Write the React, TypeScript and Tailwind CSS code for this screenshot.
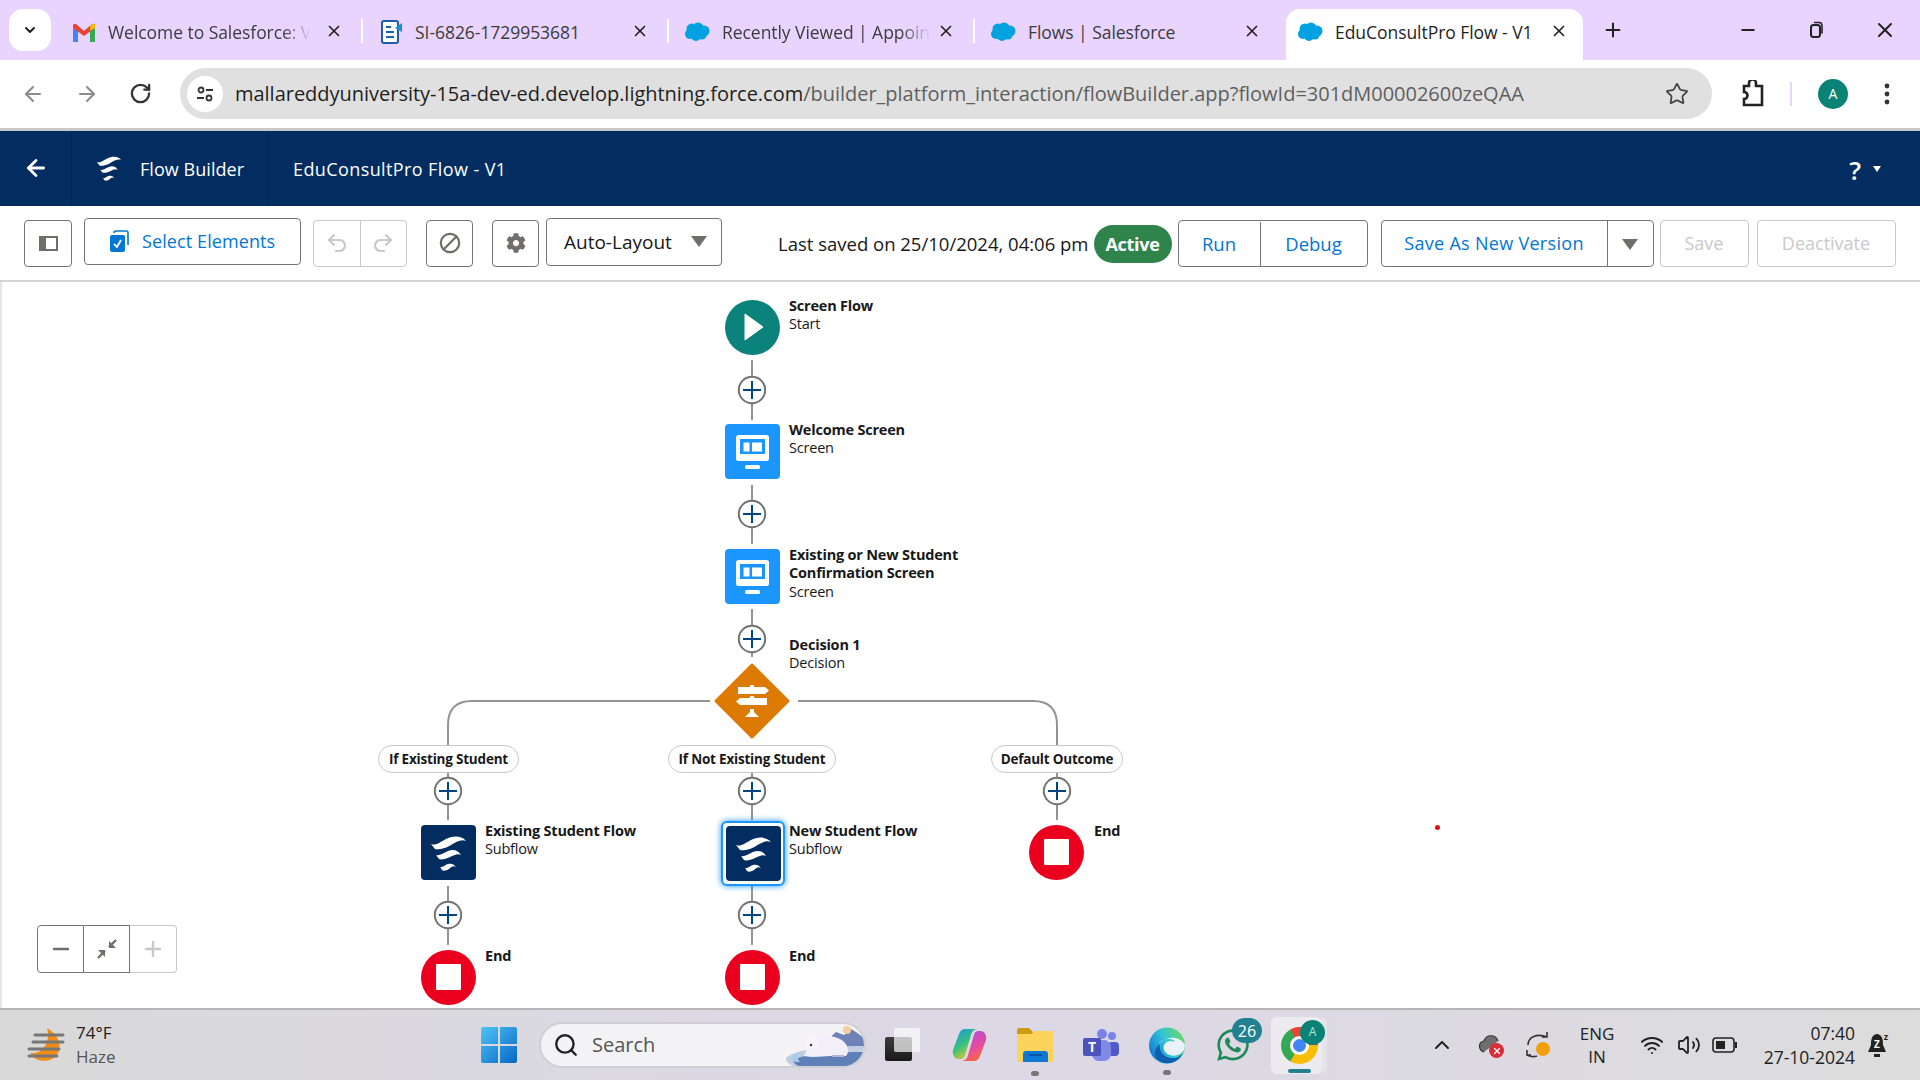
import React from "react";
import { ArrowLeft, ArrowRight, RotateCw, Star, Plus, Minus, X, Search, Ban, Undo2, Redo2, ChevronDown, ChevronUp, Wifi, Volume2 } from "lucide-react";
import { FaCog, FaWhatsapp } from "react-icons/fa";

const font = "font-['Open_Sans','Noto_Sans',sans-serif]";

const CloudIcon = () => (
	<svg width="26" height="20" viewBox="0 0 26 20" className="shrink-0">
		<g fill="#00A1E0">
			<circle cx="8" cy="7" r="5.5" />
			<circle cx="14" cy="6" r="5.5" />
			<circle cx="20" cy="9" r="5.5" />
			<circle cx="6" cy="12" r="5" />
			<circle cx="12" cy="14" r="5" />
			<circle cx="18" cy="13" r="4.5" />
		</g>
	</svg>
);

const GmailIcon = () => (
	<svg width="24" height="19" viewBox="0 0 24 19" className="shrink-0">
		<path d="M1 5 L1 19 L6 19 L6 8z" fill="#4285F4" />
		<path d="M18 8 L18 19 L23 19 L23 5z" fill="#34A853" />
		<path d="M1 5 L1 2 Q2 0 4 1 L12 8 L20 1 Q22 0 23 2 L23 5 L12 13z" fill="#EA4335" />
		<path d="M18 8 L23 5 L23 2 Q22 0 20 1 L18 3z" fill="#FBBC04" />
	</svg>
);

const DocIcon = () => (
	<svg width="22" height="24" viewBox="0 0 22 24" className="ml-[3px] shrink-0">
		<rect x="1" y="1" width="16" height="22" rx="2" fill="#fff" stroke="#1a5fa8" strokeWidth="2" />
		<path d="M5 7h5M5 12h8M5 17h8" stroke="#1a5fa8" strokeWidth="2" />
		<path d="M21 3 L14 8 L21 12z" fill="#1a8fd0" />
	</svg>
);

const Tab = ({ icon, title, active, noSep, fade }: { icon: React.ReactNode; title: string; active?: boolean; noSep?: boolean; fade?: boolean }) => (
	<div className={`relative flex h-[51px] shrink-0 items-center pb-[4px] ${active ? "ml-[5px] w-[297px] rounded-t-[14px] bg-white pl-[11px]" : "w-[306px] pl-[15px]"}`}>
		{icon}
		<span className={`ml-[12px] whitespace-nowrap text-[17.5px] tracking-[-0.05px] ${fade ? "text-[#3c3c3c] [mask-image:linear-gradient(to_right,black_86%,transparent)]" : active ? "text-[#1f1f1f]" : "text-[#3c3c3c]"}`}>
			{title}
		</span>
		<X size={18} strokeWidth={2.2} className={`absolute top-[13px] text-[#222] ${active ? "left-[264px]" : "left-[268px]"}`} />
		{!noSep && !active && <span className="absolute right-0 top-[10px] h-[24px] w-[2px] bg-white" />}
	</div>
);

const TopBars = () => (
	<>
		<div className="flex h-[60px] items-end bg-[#e8d4fe]">
			<div className="mb-[9px] ml-[9px] flex h-[42px] w-[42px] items-center justify-center rounded-[14px] bg-white">
				<ChevronDown size={16} strokeWidth={3} className="text-[#222]" />
			</div>
			<div className="ml-[6px] flex">
				<Tab icon={<GmailIcon />} title="Welcome to Salesforce: V" fade />
				<Tab icon={<DocIcon />} title="SI-6826-1729953681" />
				<Tab icon={<CloudIcon />} title="Recently Viewed | Appoin" fade />
				<Tab icon={<CloudIcon />} title="Flows | Salesforce" noSep />
				<Tab icon={<CloudIcon />} title="EduConsultPro Flow - V1" active />
			</div>
			<Plus size={22} strokeWidth={2.2} className="mb-[19px] ml-[19px] text-[#222]" />
			<Minus size={20} strokeWidth={2.2} className="mb-[20px] ml-[114px] text-[#222]" />
			<svg width="16" height="18" viewBox="0 0 16 18" className="mb-[21px] ml-[51px]">
				<rect x="2" y="4" width="9" height="12" rx="2.5" fill="none" stroke="#222" strokeWidth="2" />
				<path d="M5 1.5h5a3 3 0 0 1 3 3v8" fill="none" stroke="#222" strokeWidth="1.6" />
			</svg>
			<X size={24} strokeWidth={2} className="mb-[18px] ml-[48px] text-[#222]" />
		</div>
		<div className="flex h-[68px] items-center rounded-t-[10px] bg-white">
			<ArrowLeft size={24} strokeWidth={2} className="ml-[21px] text-[#8a8a8a]" />
			<ArrowRight size={24} strokeWidth={2} className="ml-[30px] text-[#8a8a8a]" />
			<RotateCw size={23} strokeWidth={2.4} className="ml-[30px] text-[#333]" />
			<div className="ml-[28px] flex h-[51px] w-[1532px] items-center rounded-full bg-[#e0e0e0] pl-[7px]">
				<div className="flex h-[36px] w-[36px] items-center justify-center rounded-full bg-white">
					<svg width="18" height="18" viewBox="0 0 18 18" fill="none" stroke="#333" strokeWidth="1.8">
						<circle cx="5" cy="5" r="2.5" />
						<path d="M10 5h7M1 13h7" />
						<circle cx="13" cy="13" r="2.5" />
					</svg>
				</div>
				<span className="ml-[12px] whitespace-nowrap text-[20px] tracking-[-0.02px] text-[#1f1f1f]">
					mallareddyuniversity-15a-dev-ed.develop.lightning.force.com
					<span className="text-[#5f5f5f]">/builder_platform_interaction/flowBuilder.app?flowId=301dM00002600zeQAA</span>
				</span>
				<Star size={24} strokeWidth={1.8} className="ml-auto mr-[23px] text-[#444]" />
			</div>
			<svg width="26" height="28" viewBox="0 0 26 28" className="ml-[28px]" fill="none" stroke="#222" strokeWidth="2.6">
				<path d="M4 6h5V3a3 3 0 0 1 7 0v3h6v19H4v-6a3 3 0 0 0 0-7z" />
			</svg>
			<span className="ml-[24px] h-[24px] w-[2px] bg-[#e8d4fe]" />
			<div className="ml-[26px] flex h-[30px] w-[30px] items-center justify-center rounded-full bg-[#0b8276] text-[14px] text-white">A</div>
			<svg width="6" height="24" viewBox="0 0 6 24" className="ml-[36px]" fill="#333">
				<circle cx="3" cy="4" r="2.4" />
				<circle cx="3" cy="12" r="2.4" />
				<circle cx="3" cy="20" r="2.4" />
			</svg>
		</div>
		<div className="h-[3px] bg-[#c9c9c9]" />
	</>
);

// the three waves of the Flow logo, viewBox fits the mark inside a 56px node
const FlowMark = ({ size, className }: { size: number; className?: string }) => (
	<svg width={size} height={size} viewBox="10 9 37 37" className={className} fill="#fff">
		<path d="M11 19 C16 21 20 17 26 14 C32 11 41 10 46 16 C41 14 36 17 31 20 C25 24 17 25 15 24 Z" />
		<path d="M16 30 C20 31 23 28 28 26 C33 24 38 25 41 30 C38 28 34 30 30 32 C26 34 21 35 19 34 Z" />
		<path d="M20 42 C22 43 25 40 28 39 C31 38 34 39 36 42 C33 40 31 42 29 44 C26 46 23 46 22 45 Z" />
	</svg>
);

const AppHeader = () => (
	<div className="flex h-[75px] items-stretch bg-[#032d60] text-white">
		<div className="flex w-[72px] items-center justify-center border-r border-[#04244d]">
			<ArrowLeft size={26} strokeWidth={2.6} />
		</div>
		<div className="flex w-[196px] items-center border-r border-[#04244d] pl-[24px]">
			<FlowMark size={26} />
			<span className="ml-[18px] pt-[2px] text-[18px] tracking-[0.05px]">Flow Builder</span>
		</div>
		<div className="ml-[25px] flex items-center pt-[2px] text-[18px] tracking-[0.4px]">EduConsultPro Flow - V1</div>
		<div className="ml-auto mr-[39px] flex items-center">
			<span className="pt-[4px] text-[26px] font-semibold">?</span>
			<span className="ml-[12px] mt-[2px] h-0 w-0 border-x-[4px] border-t-[6px] border-x-transparent border-t-white" />
		</div>
	</div>
);

const Caret = ({ className }: { className: string }) => (
	<span className={`h-0 w-0 border-x-[8px] border-t-[11px] border-x-transparent border-t-[#706e6b] ${className}`} />
);

const Toolbar = () => (
	<div className="flex h-[76px] items-start border-b-2 border-[#d4d4d4] bg-white pl-[24px] pt-[12px] text-[18px]">
		<button className="mt-[2px] flex h-[47px] w-[48px] items-center justify-center rounded-[4px] border border-[#747474]">
			<svg width="19" height="15" viewBox="0 0 19 15">
				<rect x="1" y="1" width="17" height="13" fill="none" stroke="#706e6b" strokeWidth="2" />
				<rect x="1" y="1" width="6" height="13" fill="#706e6b" />
			</svg>
		</button>
		<button className="ml-[12px] flex h-[47px] w-[217px] items-center rounded-[4px] border border-[#747474] pl-[24px] text-[#0176d3]">
			<svg width="20" height="22" viewBox="0 0 20 22" className="mr-[13px]">
				<path d="M5 3 Q5 1 7 1 H18 Q19 1 19 3 V15" fill="none" stroke="#0176d3" strokeWidth="1.6" />
				<rect x="1" y="5" width="15" height="17" rx="2" fill="#0176d3" />
				<path d="M5 14 L8 17 L12 10" fill="none" stroke="#fff" strokeWidth="1.8" />
			</svg>
			<span className="pt-[1px] tracking-[0.1px]">Select Elements</span>
		</button>
		<div className="ml-[12px] mt-[2px] flex h-[47px] w-[94px] rounded-[4px] border border-[#c9c9c9] text-[#c9c9c9]">
			<div className="flex flex-1 items-center justify-center border-r border-[#c9c9c9]">
				<Undo2 size={24} strokeWidth={2.2} />
			</div>
			<div className="flex flex-1 items-center justify-center">
				<Redo2 size={24} strokeWidth={2.2} />
			</div>
		</div>
		<button className="ml-[19px] mt-[2px] flex h-[47px] w-[47px] items-center justify-center rounded-[4px] border border-[#747474] text-[#706e6b]">
			<Ban size={22} strokeWidth={2.4} className="-scale-x-100" />
		</button>
		<button className="ml-[19px] mt-[2px] flex h-[47px] w-[47px] items-center justify-center rounded-[4px] border border-[#747474] text-[#706e6b]">
			<FaCog size={20} />
		</button>
		<button className="ml-[7px] flex h-[48px] w-[176px] items-center rounded-[4px] border border-[#747474] pl-[17px] text-[19px] text-[#181818]">
			<span>Auto-Layout</span>
			<Caret className="ml-auto mr-[14px]" />
		</button>
		<span className="ml-[56px] mt-[12px] whitespace-nowrap text-[18.5px] text-[#181818]">Last saved on 25/10/2024, 04:06 pm</span>
		<span className="ml-[5px] mt-[7px] flex h-[38px] w-[78px] items-center justify-center rounded-full bg-[#2e844a] pt-[1px] font-bold tracking-[-0.3px] text-white">Active</span>
		<div className="ml-[6px] mt-[2px] flex h-[47px] w-[190px] rounded-[4px] border border-[#747474] pt-[1px] text-[18.5px] text-[#0176d3]">
			<div className="flex w-[82px] items-center justify-center border-r border-[#747474]">Run</div>
			<div className="flex flex-1 items-center justify-center">Debug</div>
		</div>
		<div className="ml-[13px] mt-[2px] flex h-[47px] w-[273px] rounded-[4px] border border-[#747474] text-[#0176d3]">
			<div className="flex w-[226px] items-center justify-center whitespace-nowrap border-r border-[#747474] pt-[1px] tracking-[0.3px]">Save As New Version</div>
			<div className="flex flex-1 items-center justify-center">
				<Caret className="mt-[3px]" />
			</div>
		</div>
		<button className="ml-[6px] mt-[2px] flex h-[47px] w-[89px] items-center justify-center rounded-[4px] border border-[#c9c9c9] pt-[1px] text-[#c9c9c9]">Save</button>
		<button className="ml-[8px] mt-[2px] flex h-[47px] w-[139px] items-center justify-center rounded-[4px] border border-[#c9c9c9] pt-[1px] text-[#c9c9c9]">Deactivate</button>
	</div>
);

const AddButton = ({ x, y }: { x: number; y: number }) => (
	<g>
		<circle cx={x} cy={y} r="13.2" fill="#fff" stroke="#747474" strokeWidth="2" />
		<path d={`M${x - 9} ${y}H${x + 9}M${x} ${y - 9}V${y + 9}`} stroke="#014486" strokeWidth="2" />
	</g>
);

// connectors and + buttons, in page coordinates
const Connectors = () => (
	<svg width="1918" height="726" viewBox="2 282 1918 726" className="absolute left-0 top-0" fill="none">
		<g stroke="#939393" strokeWidth="2">
			<path d="M752 360V420M752 485V544M752 609V657" />
			<path d="M710 701H472Q448 701 448 725V745M798 701H1033Q1057 701 1057 725V745" />
			<path d="M448 772V820M752 772V820M1057 772V820M448 886V945M752 886V945" />
		</g>
		<AddButton x={752} y={390} />
		<AddButton x={752} y={514} />
		<AddButton x={752} y={639} />
		<AddButton x={448} y={791} />
		<AddButton x={752} y={791} />
		<AddButton x={1057} y={791} />
		<AddButton x={448} y={915} />
		<AddButton x={752} y={915} />
	</svg>
);

const StartNode = ({ className }: { className: string }) => (
	<div className={`absolute flex h-[55px] w-[55px] items-center justify-center rounded-full bg-[#0b827c] ${className}`}>
		<svg width="20" height="28" viewBox="0 0 20 28" className="ml-[3px]">
			<path d="M1 1 L19 14 L1 27z" fill="#fff" stroke="#fff" strokeLinejoin="round" />
		</svg>
	</div>
);

const ScreenNode = ({ className }: { className: string }) => (
	<div className={`absolute h-[55px] w-[55px] rounded-[4px] bg-[#1b96ff] ${className}`}>
		<svg width="55" height="55" viewBox="0 0 55 55">
			<rect x="11" y="11" width="33" height="26" rx="2.5" fill="#fff" />
			<rect x="15" y="15" width="25" height="15" fill="#1b96ff" />
			<rect x="18.5" y="18.5" width="6" height="9" fill="#fff" />
			<rect x="27" y="18.5" width="10" height="9" fill="#fff" />
			<rect x="20" y="41" width="15" height="4" rx="1.5" fill="#fff" />
		</svg>
	</div>
);

const SubflowNode = ({ className }: { className: string }) => (
	<div className={`absolute flex h-[55px] w-[55px] items-center justify-center rounded-[4px] bg-[#032d60] ${className}`}>
		<FlowMark size={37} />
	</div>
);

const EndNode = ({ className }: { className: string }) => (
	<div className={`absolute flex h-[55px] w-[55px] items-center justify-center rounded-full bg-[#ea001e] ${className}`}>
		<span className="h-[26px] w-[25px] rounded-[1px] bg-white" />
	</div>
);

const DecisionNode = ({ className }: { className: string }) => (
	<svg width="78" height="78" viewBox="0 0 78 78" className={`absolute ${className}`}>
		<path d="M39 3 L75 39 L39 75 L3 39z" fill="#dd7a01" stroke="#dd7a01" strokeWidth="3" strokeLinejoin="round" />
		<path d="M25 25 H37 V23 H41 V25 H52 L56 28.500 L52 32 H25z" fill="#fff" />
		<path d="M27 36 H37 V34 H41 V36 H54 V43 H27 L23 39.500z" fill="#fff" />
		<path d="M37 47 H41 V50 L46 55 H32 L37 50z" fill="#fff" />
	</svg>
);

const NodeLabel = ({ title, sub, className }: { title: React.ReactNode; sub?: string; className: string }) => (
	<div className={`absolute text-[14.5px] leading-[18.5px] tracking-[-0.2px] text-[#181818] ${className}`}>
		<div className="font-bold">{title}</div>
		{sub && <div>{sub}</div>}
	</div>
);

const OutcomePill = ({ text, className }: { text: string; className: string }) => (
	<div className={`absolute flex h-[28px] items-center justify-center rounded-full border border-[#c9c9c9] bg-white text-[13.5px] font-bold tracking-[-0.2px] text-[#181818] ${className}`}>
		{text}
	</div>
);

const Canvas = () => (
	<div className="relative h-[727px] border-l-[2px] border-[#e5e5e5] bg-white">
		<Connectors />
		<StartNode className="left-[723px] top-[18px]" />
		<NodeLabel className="left-[787px] top-[15px]" title="Screen Flow" sub="Start" />
		<ScreenNode className="left-[723px] top-[142px]" />
		<NodeLabel className="left-[787px] top-[139px]" title="Welcome Screen" sub="Screen" />
		<ScreenNode className="left-[723px] top-[267px]" />
		<NodeLabel
			className="left-[787px] top-[264px]"
			title={<>Existing or New Student<br />Confirmation Screen</>}
			sub="Screen"
		/>
		<NodeLabel className="left-[787px] top-[354px]" title="Decision 1" sub="Decision" />
		<DecisionNode className="left-[711px] top-[380px]" />
		<OutcomePill text="If Existing Student" className="left-[376px] top-[463px] w-[141px]" />
		<OutcomePill text="If Not Existing Student" className="left-[666px] top-[463px] w-[168px]" />
		<OutcomePill text="Default Outcome" className="left-[989px] top-[463px] w-[132px]" />

		<SubflowNode className="left-[419px] top-[543px]" />
		<NodeLabel className="left-[483px] top-[540px]" title="Existing Student Flow" sub="Subflow" />
		<div className="absolute left-[719px] top-[539px] flex h-[65px] w-[64px] items-center justify-center rounded-[6px] border-2 border-[#1b96ff] bg-white shadow-[0_0_6px_#1b96ff]">
			<div className="relative h-[55px] w-[55px]">
				<SubflowNode className="left-0 top-0" />
			</div>
		</div>
		<NodeLabel className="left-[787px] top-[540px]" title="New Student Flow" sub="Subflow" />
		<EndNode className="left-[1027px] top-[543px]" />
		<NodeLabel className="left-[1092px] top-[540px]" title="End" />
		<EndNode className="left-[419px] top-[668px]" />
		<NodeLabel className="left-[483px] top-[665px]" title="End" />
		<EndNode className="left-[723px] top-[668px]" />
		<NodeLabel className="left-[787px] top-[665px]" title="End" />

		{/* stray red dot */}
		<span className="absolute left-[1433px] top-[543px] h-[5px] w-[5px] rounded-full bg-[#e01010]" />

		<div className="absolute left-[35px] top-[643px] flex h-[48px] w-[140px] rounded-[4px]">
			<div className="flex w-[47px] items-center justify-center rounded-l-[4px] border border-[#747474] text-[#706e6b]">
				<Minus size={24} strokeWidth={2.4} />
			</div>
			<div className="flex w-[46px] items-center justify-center border-y border-r border-[#747474] text-[#706e6b]">
				<svg width="20" height="20" viewBox="0 0 20 20" fill="#706e6b">
					<path d="M19 1 L12 8 M1 19 L8 12" stroke="#706e6b" strokeWidth="2.4" />
					<path d="M12 2V9H19zM1 11H8V18z" />
				</svg>
			</div>
			<div className="flex flex-1 items-center justify-center rounded-r-[4px] border-y border-r border-[#c9c9c9] text-[#c9c9c9]">
				<Plus size={24} strokeWidth={2.4} />
			</div>
		</div>
	</div>
);

const RunningDot = () => <span className="absolute top-[43px] h-[5px] w-[8px] rounded-full bg-[#777]" />;

const Taskbar = () => (
	<div className="flex h-[72px] items-center border-t-2 border-[#b5b5b5] bg-gradient-to-r from-[#d9d9d9] via-[#dcd8e6] to-[#dcdcdc] text-[#333]">
		<svg width="38" height="36" viewBox="0 0 38 36" className="ml-[27px]">
			<path d="M20 1 C32 8 36 20 30 28 C24 36 8 36 3 26 C16 28 24 14 20 1z" fill="#f28c16" />
			<path d="M8 8H36M6 15H36M2 22H32M2 29H30" stroke="#777" strokeWidth="3" strokeLinecap="round" />
		</svg>
		<div className="ml-[11px] w-[60px] text-[17px] leading-[24px]">
			<div className="text-[#222]">74°F</div>
			<div className="text-[#555]">Haze</div>
		</div>
		<svg width="36" height="36" viewBox="0 0 36 36" className="ml-[345px]">
			<defs>
				<linearGradient id="win" x1="0" y1="0" x2="1" y2="1">
					<stop offset="0" stopColor="#4fc3f7" />
					<stop offset="1" stopColor="#0667c4" />
				</linearGradient>
			</defs>
			<path d="M0 2 Q0 0 2 0H17V17H0zM19 0H34Q36 0 36 2V17H19zM0 19H17V36H2Q0 36 0 34zM19 19H36V34Q36 36 34 36H19z" fill="url(#win)" />
		</svg>
		<div className="relative ml-[22px] flex h-[46px] w-[327px] items-center overflow-hidden rounded-full border-2 border-[#cfcfd6] bg-[#f3f3f6] pl-[12px]">
			<Search size={26} strokeWidth={2.2} className="text-[#222]" />
			<span className="ml-[13px] text-[20px] text-[#555]">Search</span>
			<svg width="78" height="44" viewBox="0 0 78 44" className="absolute right-0 top-0">
				<path d="M37 20L50 8L58 11L65 5L70 8L78 14V24H40z" fill="#6d83b8" />
				<circle cx="61" cy="6" r="4" fill="#f3cfa0" />
				<path d="M78 22V44H20C8 44 0 40 0 34C10 24 50 22 78 22z" fill="#c3cde2" />
				<path d="M78 28V44H24C14 44 6 40 8 36C16 30 50 28 78 28z" fill="#5f7fb8" />
				<path d="M6 36C4 32 10 28 16 27C12 30 10 34 14 38C10 38 8 38 6 36z" fill="#a7cdea" />
				<path d="M22 14C30 9 44 11 54 15C62 19 64 28 60 32H44C36 32 28 34 18 32C22 26 20 20 22 14z" fill="#f3eff9" />
				<circle cx="25" cy="18" r="7" fill="#f6f3fb" />
				<circle cx="20" cy="12" r="2" fill="#f6f3fb" />
				<circle cx="30" cy="12" r="2" fill="#f6f3fb" />
				<circle cx="25" cy="21" r="1.2" fill="#333" />
				<path d="M46 32H58" stroke="#b9b2d0" strokeWidth="2" />
			</svg>
		</div>
		<svg width="36" height="34" viewBox="0 0 36 34" className="ml-[19px]">
			<defs>
				<linearGradient id="tv" x1="0" y1="0" x2="0" y2="1">
					<stop offset="0" stopColor="#3d3d3d" />
					<stop offset="1" stopColor="#1a1a1a" />
				</linearGradient>
			</defs>
			<rect x="0" y="9" width="27" height="24" rx="2" fill="url(#tv)" />
			<rect x="9" y="0" width="26" height="24" rx="2" fill="#fafafa" fillOpacity="0.72" />
		</svg>
		<svg width="35" height="34" viewBox="0 0 35 34" className="ml-[31px]">
			<defs>
				<linearGradient id="cop1" x1="0" y1="0" x2="0.6" y2="1">
					<stop offset="0" stopColor="#1f8fe8" />
					<stop offset="0.55" stopColor="#35c27a" />
					<stop offset="1" stopColor="#f3c623" />
				</linearGradient>
				<linearGradient id="cop2" x1="0.4" y1="0" x2="0.8" y2="1">
					<stop offset="0" stopColor="#b04fd8" />
					<stop offset="0.55" stopColor="#e84c9c" />
					<stop offset="1" stopColor="#f7702b" />
				</linearGradient>
			</defs>
			<path d="M13 1 H27 C22 1 20 3 19 7 L13 27 C12 31 10 31 7 31 C2 31 0 26 1 22 L7 6 C8 3 10 1 13 1z" fill="url(#cop1)" />
			<path d="M22 33 H8 C13 33 15 31 16 27 L22 7 C23 3 25 3 28 3 C33 3 35 8 34 12 L28 28 C27 31 25 33 22 33z" fill="url(#cop2)" />
		</svg>
		<div className="relative ml-[30px] flex flex-col items-center">
			<svg width="36" height="34" viewBox="0 0 36 34">
				<path d="M0 2Q0 0 2 0H12L17 5H36V33H0z" fill="#d09a10" />
				<path d="M0 6H14L18 3H36V33Q36 34 34 34H2Q0 34 0 33z" fill="#fcd45c" />
				<path d="M6 34V26Q6 23 9 23H28Q31 23 31 26V34z" fill="#0f78d4" />
				<path d="M12 27H25" stroke="#0a4f96" strokeWidth="1.6" />
			</svg>
			<RunningDot />
		</div>
		<svg width="36" height="32" viewBox="0 0 36 32" className="ml-[30px]">
			<circle cx="29" cy="7" r="4" fill="#7b83eb" />
			<circle cx="19" cy="5" r="5" fill="#7b83eb" />
			<rect x="25" y="13" width="11" height="14" rx="4" fill="#5059c9" />
			<rect x="9" y="11" width="19" height="21" rx="7" fill="#8089e6" />
			<rect x="0" y="9" width="18" height="18" rx="2" fill="#4b53bc" />
			<text x="9" y="23" textAnchor="middle" fontSize="14" fontWeight="700" fill="#fff" fontFamily="Open Sans">T</text>
		</svg>
		<div className="relative ml-[30px] flex flex-col items-center">
			<svg width="36" height="37" viewBox="0 0 36 37">
				<defs>
					<linearGradient id="edg" x1="0" y1="0.7" x2="1" y2="0.2">
						<stop offset="0" stopColor="#1478d0" />
						<stop offset="0.5" stopColor="#31c5d8" />
						<stop offset="1" stopColor="#6fdc5c" />
					</linearGradient>
				</defs>
				<circle cx="18" cy="18.500" r="18" fill="url(#edg)" />
				<path d="M35 23C30 31 18 30 15 23C13 17 19 12 26 15C23 10 14 11 10 17C12 11 30 6 36 18z" fill="#e8f2f8" />
				<path d="M34 26C30 36 16 40 8 32C4 28 6 20 11 17C9 24 16 32 24 31C28 31 32 29 34 26z" fill="#0f5fae" />
			</svg>
			<RunningDot />
		</div>
		<div className="relative ml-[30px] flex h-[44px] w-[38px] items-center">
			<FaWhatsapp size={36} className="text-[#1f8a58]" />
			<span className="absolute left-[17px] top-[-5px] flex h-[25px] w-[30px] items-center justify-center rounded-full bg-[#23818f] text-[16px] text-white">26</span>
		</div>
		<div className="relative ml-[18px] flex h-[57px] w-[56px] items-center rounded-[6px] border-r-[5px] border-[#e4e3ea] pl-[10px]">
			<span className="absolute left-0 top-0 h-[57px] w-[51px] rounded-[6px] bg-[#ecebf0]" />
			<span className="relative flex h-[37px] w-[37px] items-center justify-center rounded-full bg-[conic-gradient(from_-30deg,#ea4335_0_33.3%,#fbbc04_33.3%_66.6%,#34a853_66.6%_100%)]">
				<span className="h-[19px] w-[19px] rounded-full border-[3px] border-white bg-[#4285f4]" />
			</span>
			<span className="absolute left-[29px] top-[3px] flex h-[25px] w-[25px] items-center justify-center rounded-full bg-[#0b8276] text-[12px] text-[#b8e3da]">A</span>
			<span className="absolute bottom-[1px] left-[17px] h-[4px] w-[23px] rounded-full bg-[#23818f]" />
		</div>
		<ChevronUp size={24} strokeWidth={2} className="ml-[103px] text-[#222]" />
		<div className="relative ml-[24px] h-[26px] w-[26px]">
			<svg width="24" height="22" viewBox="0 0 24 22">
				<path d="M6 20C0 18 0 10 6 9C8 2 18 2 20 9" fill="#6f6f6f" stroke="#333" strokeWidth="1.2" />
			</svg>
			<span className="absolute bottom-0 right-0 flex h-[15px] w-[15px] items-center justify-center rounded-full bg-[#d92c3a] text-white">
				<X size={10} strokeWidth={3} />
			</span>
		</div>
		<svg width="28" height="28" viewBox="0 0 28 28" className="ml-[21px]" fill="none" stroke="#333" strokeWidth="1.6">
			<path d="M3 14C3 6 12 2 22 6M22 1V6H17M6 24H2V19M2 24C6 26 9 26 12 25" />
			<circle cx="18" cy="18" r="7" fill="#f59e0b" stroke="none" />
		</svg>
		<div className="ml-[19px] w-[50px] text-center text-[17px] leading-[23px] text-[#222]">
			<div>ENG</div>
			<div>IN</div>
		</div>
		<Wifi size={24} strokeWidth={2} className="ml-[18px] text-[#222]" />
		<Volume2 size={24} strokeWidth={1.8} className="ml-[13px] text-[#222]" />
		<svg width="26" height="16" viewBox="0 0 26 16" className="ml-[11px]">
			<rect x="1" y="1" width="21" height="14" rx="3" fill="none" stroke="#222" strokeWidth="1.6" />
			<rect x="4" y="4" width="9" height="8" fill="#222" />
			<rect x="23" y="5" width="2" height="6" fill="#222" />
		</svg>
		<div className="ml-[23px] w-[94px] text-right text-[17.5px] leading-[24px] text-[#222]">
			<div>07:40</div>
			<div className="whitespace-nowrap">27-10-2024</div>
		</div>
		<svg width="24" height="28" viewBox="0 0 24 28" className="ml-[12px]">
			<path d="M10 3C4 4 4 10 4 14L1 21H19L16 14C16 10 16 4 10 3z" fill="#222" />
			<rect x="7" y="23" width="6" height="3" fill="#222" />
			<text x="10" y="17" textAnchor="middle" fontSize="10" fontWeight="700" fill="#fff" fontFamily="Open Sans">Z</text>
			<text x="19" y="9" textAnchor="middle" fontSize="9" fontWeight="700" fill="#222" fontFamily="Open Sans">z</text>
		</svg>
	</div>
);

export default function App() {
	return (
		<div className={`flex h-[1080px] w-[1920px] flex-col overflow-hidden bg-white ${font}`}>
			<TopBars />
			<AppHeader />
			<Toolbar />
			<Canvas />
			<Taskbar />
		</div>
	);
}
